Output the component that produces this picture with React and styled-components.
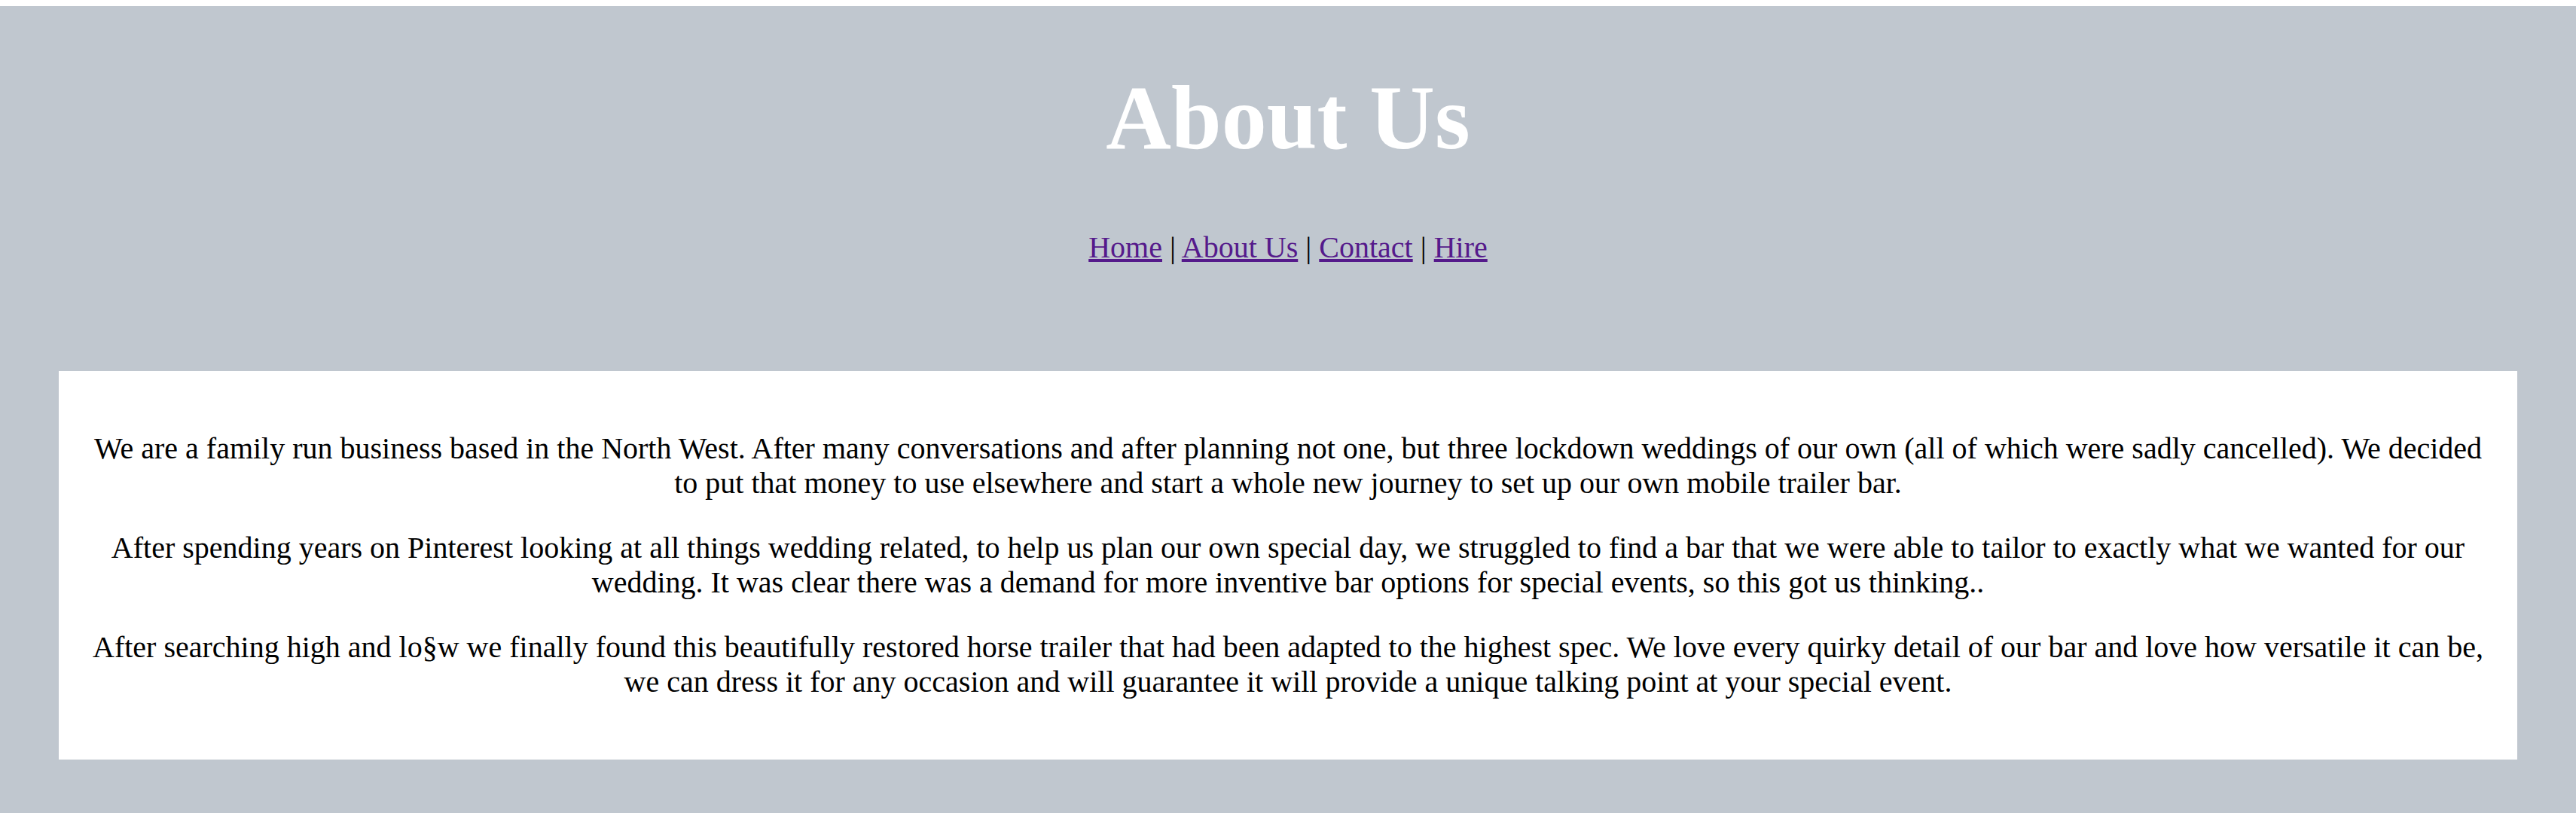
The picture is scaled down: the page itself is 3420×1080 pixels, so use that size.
import React from 'react';
import styled, { createGlobalStyle } from 'styled-components';

const pagegrey = '#c0c7cf';

const GlobalStyle = createGlobalStyle`
    html, body {
        background: #ffffff;
    }
    body {
        margin: 8px 0 0 0;
        font-family: "Liberation Serif", "Times New Roman", serif;
        font-size: 40px;
        color: #000000;
    }
`

const Page = styled.div`
    display: flow-root;
    background-color: ${pagegrey};
    min-height: 1072px;
    padding-bottom: 80px;
    box-sizing: border-box;
`

const Header = styled.header`
    text-align: center;
`

const Title = styled.h1`
    margin: 80px 0 0 0;
    font-size: 120px;
    font-weight: bold;
    line-height: 138px;
    color: #ffffff;
`

const Nav = styled.nav`
    margin-top: 80px;
    font-size: 40px;
    line-height: 46px;
`

const NavLink = styled.a`
    color: #551a8b;
    text-decoration: underline;
`

const Card = styled.main`
    margin: 141px 78px 0 78px;
    padding: 40px;
    background-color: #ffffff;
    text-align: center;
`

const Para = styled.p`
    margin: 40px 0;
    font-size: 40px;
    line-height: 46px;
`

const links = ['Home', 'About Us', 'Contact', 'Hire'];

const App = () => {
    return (
        <>
            <GlobalStyle />
            <Page>
                <Header>
                    <Title>About Us</Title>
                    <Nav>
                        {links.map((l, i) => (
                            <React.Fragment key={l}>
                                {i > 0 && ' | '}
                                <NavLink href="#">{l}</NavLink>
                            </React.Fragment>
                        ))}
                    </Nav>
                </Header>

                <Card>
                    <Para>
                        We are a family run business based in the North West. After many conversations and after planning not one, but three lockdown weddings of our own (all of which were sadly cancelled). We decided to put that money to use elsewhere and start a whole new journey to set up our own mobile trailer bar.
                    </Para>
                    <Para>
                        After spending years on Pinterest looking at all things wedding related, to help us plan our own special day, we struggled to find a bar that we were able to tailor to exactly what we wanted for our wedding. It was clear there was a demand for more inventive bar options for special events, so this got us thinking..
                    </Para>
                    <Para>
                        After searching high and lo§w we finally found this beautifully restored horse trailer that had been adapted to the highest spec. We love every quirky detail of our bar and love how versatile it can be, we can dress it for any occasion and will guarantee it will provide a unique talking point at your special event.
                    </Para>
                </Card>
            </Page>
        </>
    )
}
export default App;
